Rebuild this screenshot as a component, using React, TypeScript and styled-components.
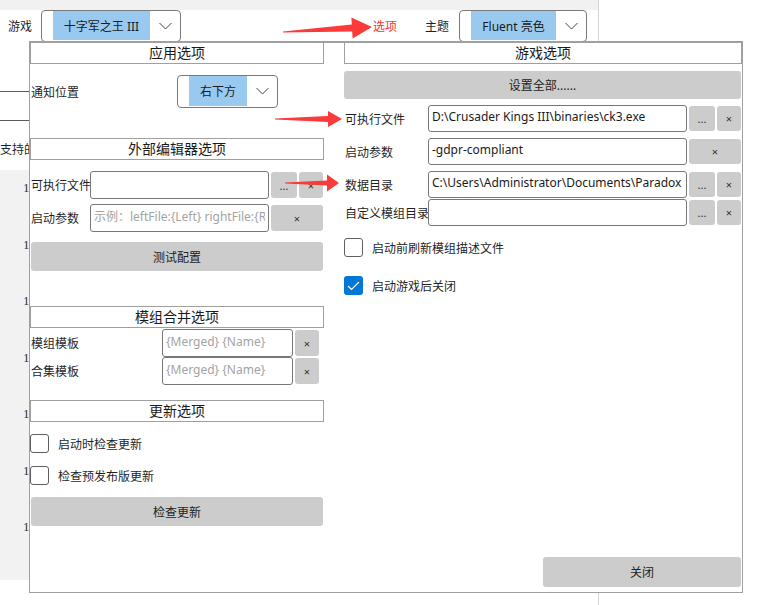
import React from "react";
import styled, { createGlobalStyle } from "styled-components";

const GlobalStyle = createGlobalStyle`
  html, body {
    margin: 0;
    padding: 0;
    background: #fff;
  }
  body {
    font-family: "Noto Sans", "Noto Sans CJK SC", sans-serif;
    font-size: 12px;
    color: #1f1f1f;
  }
  * {
    box-sizing: border-box;
  }
`;

type Pt = [number, number];

// long tapering arrow, from tail to tip
const arrowPoints = (
  tail: Pt,
  tip: Pt,
  headLen: number,
  headHalf: number,
  shaftHalf: number
) => {
  const dx = tip[0] - tail[0];
  const dy = tip[1] - tail[1];
  const len = Math.hypot(dx, dy);
  const ux = dx / len;
  const uy = dy / len;
  const nx = -uy;
  const ny = ux;
  const at = (d: number, w: number) =>
    `${(tail[0] + ux * d + nx * w).toFixed(1)},${(tail[1] + uy * d + ny * w).toFixed(1)}`;
  const base = len - headLen;
  return [
    at(0, -0.4),
    at(base, -shaftHalf),
    at(base, -headHalf),
    at(len, 0),
    at(base, headHalf),
    at(base, shaftHalf),
    at(0, 0.4),
  ].join(" ");
};

const Chevron = () => (
  <svg width="13" height="8" viewBox="0 0 13 8">
    <polyline points="0.5,1 6.5,7 12.5,1" fill="none" stroke="#444" strokeWidth="1" />
  </svg>
);

const CheckMark = () => (
  <svg width="13" height="10" viewBox="0 0 13 10">
    <polyline points="1,5 4.5,8.5 12,1" fill="none" stroke="#fff" strokeWidth="1.2" />
  </svg>
);

export default function App() {
  return (
    <>
      <GlobalStyle />
      <Page>
        <BackWindow>
          <TitleStrip />
          <Toolbar>
            <ToolLabel>游戏</ToolLabel>
            <Combo $w={140} $h={32} $ml={9}>
              <ComboValue $w={97}>十字军之王 III</ComboValue>
              <ComboArrow>
                <Chevron />
              </ComboArrow>
            </Combo>
            <ToolLabel $ml={192} $red>
              选项
            </ToolLabel>
            <ToolLabel $ml={28}>主题</ToolLabel>
            <Combo $w={128} $h={32} $ml={10}>
              <ComboValue $w={85}>Fluent 亮色</ComboValue>
              <ComboArrow>
                <Chevron />
              </ComboArrow>
            </Combo>
          </Toolbar>
          <GridLines />
          <SupportLabel>支持的游戏</SupportLabel>
          <GrayTable>
            {Array.from({ length: 8 }).map((_, i) => (
              <TableRow key={i}>1</TableRow>
            ))}
          </GrayTable>
        </BackWindow>

        <Dialog>
          <Columns>
            <Column>
              <SectionHeader>应用选项</SectionHeader>
              <FieldRow $mt={11} $h={33} $labelW={147}>
                <FieldLabel>通知位置</FieldLabel>
                <Combo $w={101} $h={33}>
                  <ComboValue $w={58}>右下方</ComboValue>
                  <ComboArrow>
                    <Chevron />
                  </ComboArrow>
                </Combo>
              </FieldRow>

              <SectionHeader $mt={30}>外部编辑器选项</SectionHeader>
              <FieldRow $mt={11} $h={28} $labelW={60}>
                <FieldLabel>可执行文件</FieldLabel>
                <TextBox readOnly defaultValue="" />
                <SmallButton $w={26}>...</SmallButton>
                <SmallButton $w={24}>×</SmallButton>
              </FieldRow>
              <FieldRow $mt={5} $h={28} $labelW={60}>
                <FieldLabel>启动参数</FieldLabel>
                <TextBox readOnly placeholder="示例：leftFile:{Left} rightFile:{Right}" />
                <SmallButton $w={52}>×</SmallButton>
              </FieldRow>
              <WideButton $mt={10} $h={29} $ml={1}>
                测试配置
              </WideButton>

              <SectionHeader $mt={35}>模组合并选项</SectionHeader>
              <FieldRow $mt={1} $h={28} $labelW={132} $pr={5}>
                <FieldLabel>模组模板</FieldLabel>
                <TextBox readOnly placeholder="{Merged} {Name}" />
                <SmallButton $w={24}>×</SmallButton>
              </FieldRow>
              <FieldRow $mt={0} $h={28} $labelW={132} $pr={5}>
                <FieldLabel>合集模板</FieldLabel>
                <TextBox readOnly placeholder="{Merged} {Name}" />
                <SmallButton $w={24}>×</SmallButton>
              </FieldRow>

              <SectionHeader $mt={15}>更新选项</SectionHeader>
              <CheckRow $mt={12}>
                <CheckBox />
                <span>启动时检查更新</span>
              </CheckRow>
              <CheckRow $mt={13}>
                <CheckBox />
                <span>检查预发布版更新</span>
              </CheckRow>
              <WideButton $mt={12} $h={29} $ml={1}>
                检查更新
              </WideButton>
            </Column>

            <Column>
              <SectionHeader>游戏选项</SectionHeader>
              <WideButton $mt={7} $h={28} $ml={0}>
                设置全部......
              </WideButton>
              <FieldRow $mt={6} $h={27} $labelW={84}>
                <FieldLabel>可执行文件</FieldLabel>
                <TextBox readOnly defaultValue="D:\Crusader Kings III\binaries\ck3.exe" />
                <SmallButton $w={26}>...</SmallButton>
                <SmallButton $w={24}>×</SmallButton>
              </FieldRow>
              <FieldRow $mt={6} $h={27} $labelW={84}>
                <FieldLabel>启动参数</FieldLabel>
                <TextBox readOnly defaultValue="-gdpr-compliant" />
                <SmallButton $w={52}>×</SmallButton>
              </FieldRow>
              <FieldRow $mt={6} $h={27} $labelW={84}>
                <FieldLabel>数据目录</FieldLabel>
                <TextBox
                  readOnly
                  defaultValue="C:\Users\Administrator\Documents\Paradox Interactive\Crusader Kings III"
                />
                <SmallButton $w={26}>...</SmallButton>
                <SmallButton $w={24}>×</SmallButton>
              </FieldRow>
              <FieldRow $mt={1} $h={27} $labelW={84}>
                <FieldLabel>自定义模组目录</FieldLabel>
                <TextBox readOnly defaultValue="" />
                <SmallButton $w={26}>...</SmallButton>
                <SmallButton $w={24}>×</SmallButton>
              </FieldRow>
              <CheckRow $mt={12}>
                <CheckBox />
                <span>启动前刷新模组描述文件</span>
              </CheckRow>
              <CheckRow $mt={19}>
                <CheckBox $checked>
                  <CheckMark />
                </CheckBox>
                <span>启动游戏后关闭</span>
              </CheckRow>
            </Column>
          </Columns>
          <Footer>
            <CloseButton>关闭</CloseButton>
          </Footer>
        </Dialog>

        <ArrowLayer width="767" height="605" viewBox="0 0 767 605">
          <polygon points={arrowPoints([283, 32], [372, 27], 20, 10.5, 3.5)} />
          <polygon points={arrowPoints([275, 119], [342, 119], 14, 8, 3)} />
          <polygon points={arrowPoints([285, 183], [339, 183], 12, 8.5, 2.5)} />
        </ArrowLayer>
      </Page>
    </>
  );
}

const Page = styled.div`
  position: relative;
  width: 767px;
  height: 605px;
  overflow: hidden;
  background: #fff;
`;

const BackWindow = styled.div`
  width: 599px;
  height: 605px;
  border-right: 1px solid #d4d4d4;
  display: flex;
  flex-direction: column;
`;

const TitleStrip = styled.div`
  height: 10px;
  background: #f1f1f1;
`;

const Toolbar = styled.div`
  display: flex;
  align-items: center;
  height: 32px;
  padding-left: 8px;
`;

const ToolLabel = styled.span<{ $ml?: number; $red?: boolean }>`
  margin-left: ${({ $ml }) => $ml ?? 0}px;
  color: ${({ $red }) => ($red ? "#ff2f2f" : "#1f1f1f")};
  font-size: 12px;
  white-space: nowrap;
`;

const Combo = styled.div<{ $w: number; $h: number; $ml?: number }>`
  display: flex;
  flex: none;
  width: ${({ $w }) => $w}px;
  height: ${({ $h }) => $h}px;
  margin-left: ${({ $ml }) => $ml ?? 0}px;
  padding: 0 0 1px 11px;
  border: 1px solid #7a7a7a;
  border-radius: 4px;
  background: #fff;
`;

const ComboValue = styled.div<{ $w: number }>`
  display: flex;
  align-items: center;
  justify-content: center;
  width: ${({ $w }) => $w}px;
  background: #99c9ef;
  font-size: 12px;
  color: #1a1a1a;
  white-space: nowrap;
`;

const ComboArrow = styled.div`
  flex: 1;
  display: flex;
  align-items: center;
  justify-content: center;
`;

const GridLines = styled.div`
  margin-top: 49px;
  height: 30px;
  border-top: 1px solid #5c5c5c;
  border-bottom: 1px solid #5c5c5c;
`;

const SupportLabel = styled.div`
  height: 49px;
  padding-top: 19px;
  line-height: 20px;
  font-size: 12px;
  white-space: nowrap;
`;

const GrayTable = styled.div`
  height: 410px;
  background: #f2f2f2;
  overflow: hidden;
`;

const TableRow = styled.div`
  height: 56.5px;
  padding: 10px 0 0 23px;
  line-height: 16px;
  font-family: "Liberation Serif", serif;
  font-size: 13px;
  color: #333;
`;

const Dialog = styled.div`
  position: absolute;
  left: 29px;
  top: 41px;
  width: 714px;
  height: 552px;
  border: 1px solid #a0a0a0;
  border-top-width: 2px;
  background: #fff;
  display: flex;
  flex-direction: column;
`;

const Columns = styled.div`
  flex: 1;
  display: grid;
  grid-template-columns: 294px 398px;
  column-gap: 20px;
  align-items: start;
  margin-top: -1px;
`;

const Column = styled.div`
  display: flex;
  flex-direction: column;
`;

const SectionHeader = styled.div<{ $mt?: number }>`
  margin-top: ${({ $mt }) => $mt ?? 0}px;
  height: 22px;
  border: 1px solid #a0a0a0;
  font-size: 14px;
  line-height: 20px;
  text-align: center;
  color: #1a1a1a;
`;

const FieldRow = styled.div<{ $mt: number; $h: number; $labelW: number; $pr?: number }>`
  display: flex;
  align-items: stretch;
  gap: 2px;
  margin-top: ${({ $mt }) => $mt}px;
  height: ${({ $h }) => $h}px;
  padding-right: ${({ $pr }) => $pr ?? 1}px;

  & > :first-child {
    width: ${({ $labelW }) => $labelW}px;
    margin-right: -2px;
  }
`;

const FieldLabel = styled.div`
  flex: none;
  display: flex;
  align-items: center;
  padding-left: 1px;
  font-size: 12px;
  white-space: nowrap;
  color: #1f1f1f;
`;

const TextBox = styled.input`
  flex: 1;
  min-width: 0;
  height: 100%;
  margin: 0;
  padding: 0 3px 4px;
  border: 1px solid #777;
  border-radius: 3px;
  background: #fff;
  font-family: "Noto Sans", "Noto Sans CJK SC", sans-serif;
  font-size: 12px;
  color: #1a1a1a;
  outline: none;

  &::placeholder {
    color: #a3a3a3;
  }
`;

const SmallButton = styled.button<{ $w: number }>`
  flex: none;
  width: ${({ $w }) => $w}px;
  margin: 1px 0;
  padding: 0;
  border: none;
  border-radius: 3px;
  background: #cccccc;
  font-family: "Noto Sans", sans-serif;
  font-size: 11px;
  color: #333;
`;

const WideButton = styled.button<{ $mt: number; $h: number; $ml: number }>`
  margin: ${({ $mt }) => $mt}px 1px 0 ${({ $ml }) => $ml}px;
  height: ${({ $h }) => $h}px;
  padding: 0;
  border: none;
  border-radius: 3px;
  background: #cccccc;
  font-family: "Noto Sans", "Noto Sans CJK SC", sans-serif;
  font-size: 12px;
  color: #222;
`;

const CheckRow = styled.div<{ $mt: number }>`
  display: flex;
  align-items: center;
  gap: 9px;
  margin-top: ${({ $mt }) => $mt}px;
  height: 19px;
  font-size: 12px;
  color: #1f1f1f;
`;

const CheckBox = styled.div<{ $checked?: boolean }>`
  width: 19px;
  height: 19px;
  flex: none;
  display: flex;
  align-items: center;
  justify-content: center;
  border-radius: 3px;
  border: ${({ $checked }) => ($checked ? "none" : "1px solid #5f5f5f")};
  background: ${({ $checked }) => ($checked ? "#0078d4" : "#fff")};
`;

const Footer = styled.div`
  display: flex;
  justify-content: flex-end;
  padding: 0 1px 5px 0;
`;

const CloseButton = styled.button`
  width: 198px;
  height: 30px;
  padding: 0;
  border: none;
  border-radius: 3px;
  background: #cccccc;
  font-family: "Noto Sans", "Noto Sans CJK SC", sans-serif;
  font-size: 12px;
  color: #222;
`;

const ArrowLayer = styled.svg`
  position: absolute;
  left: 0;
  top: 0;
  pointer-events: none;
  fill: #fb3a3a;
`;
